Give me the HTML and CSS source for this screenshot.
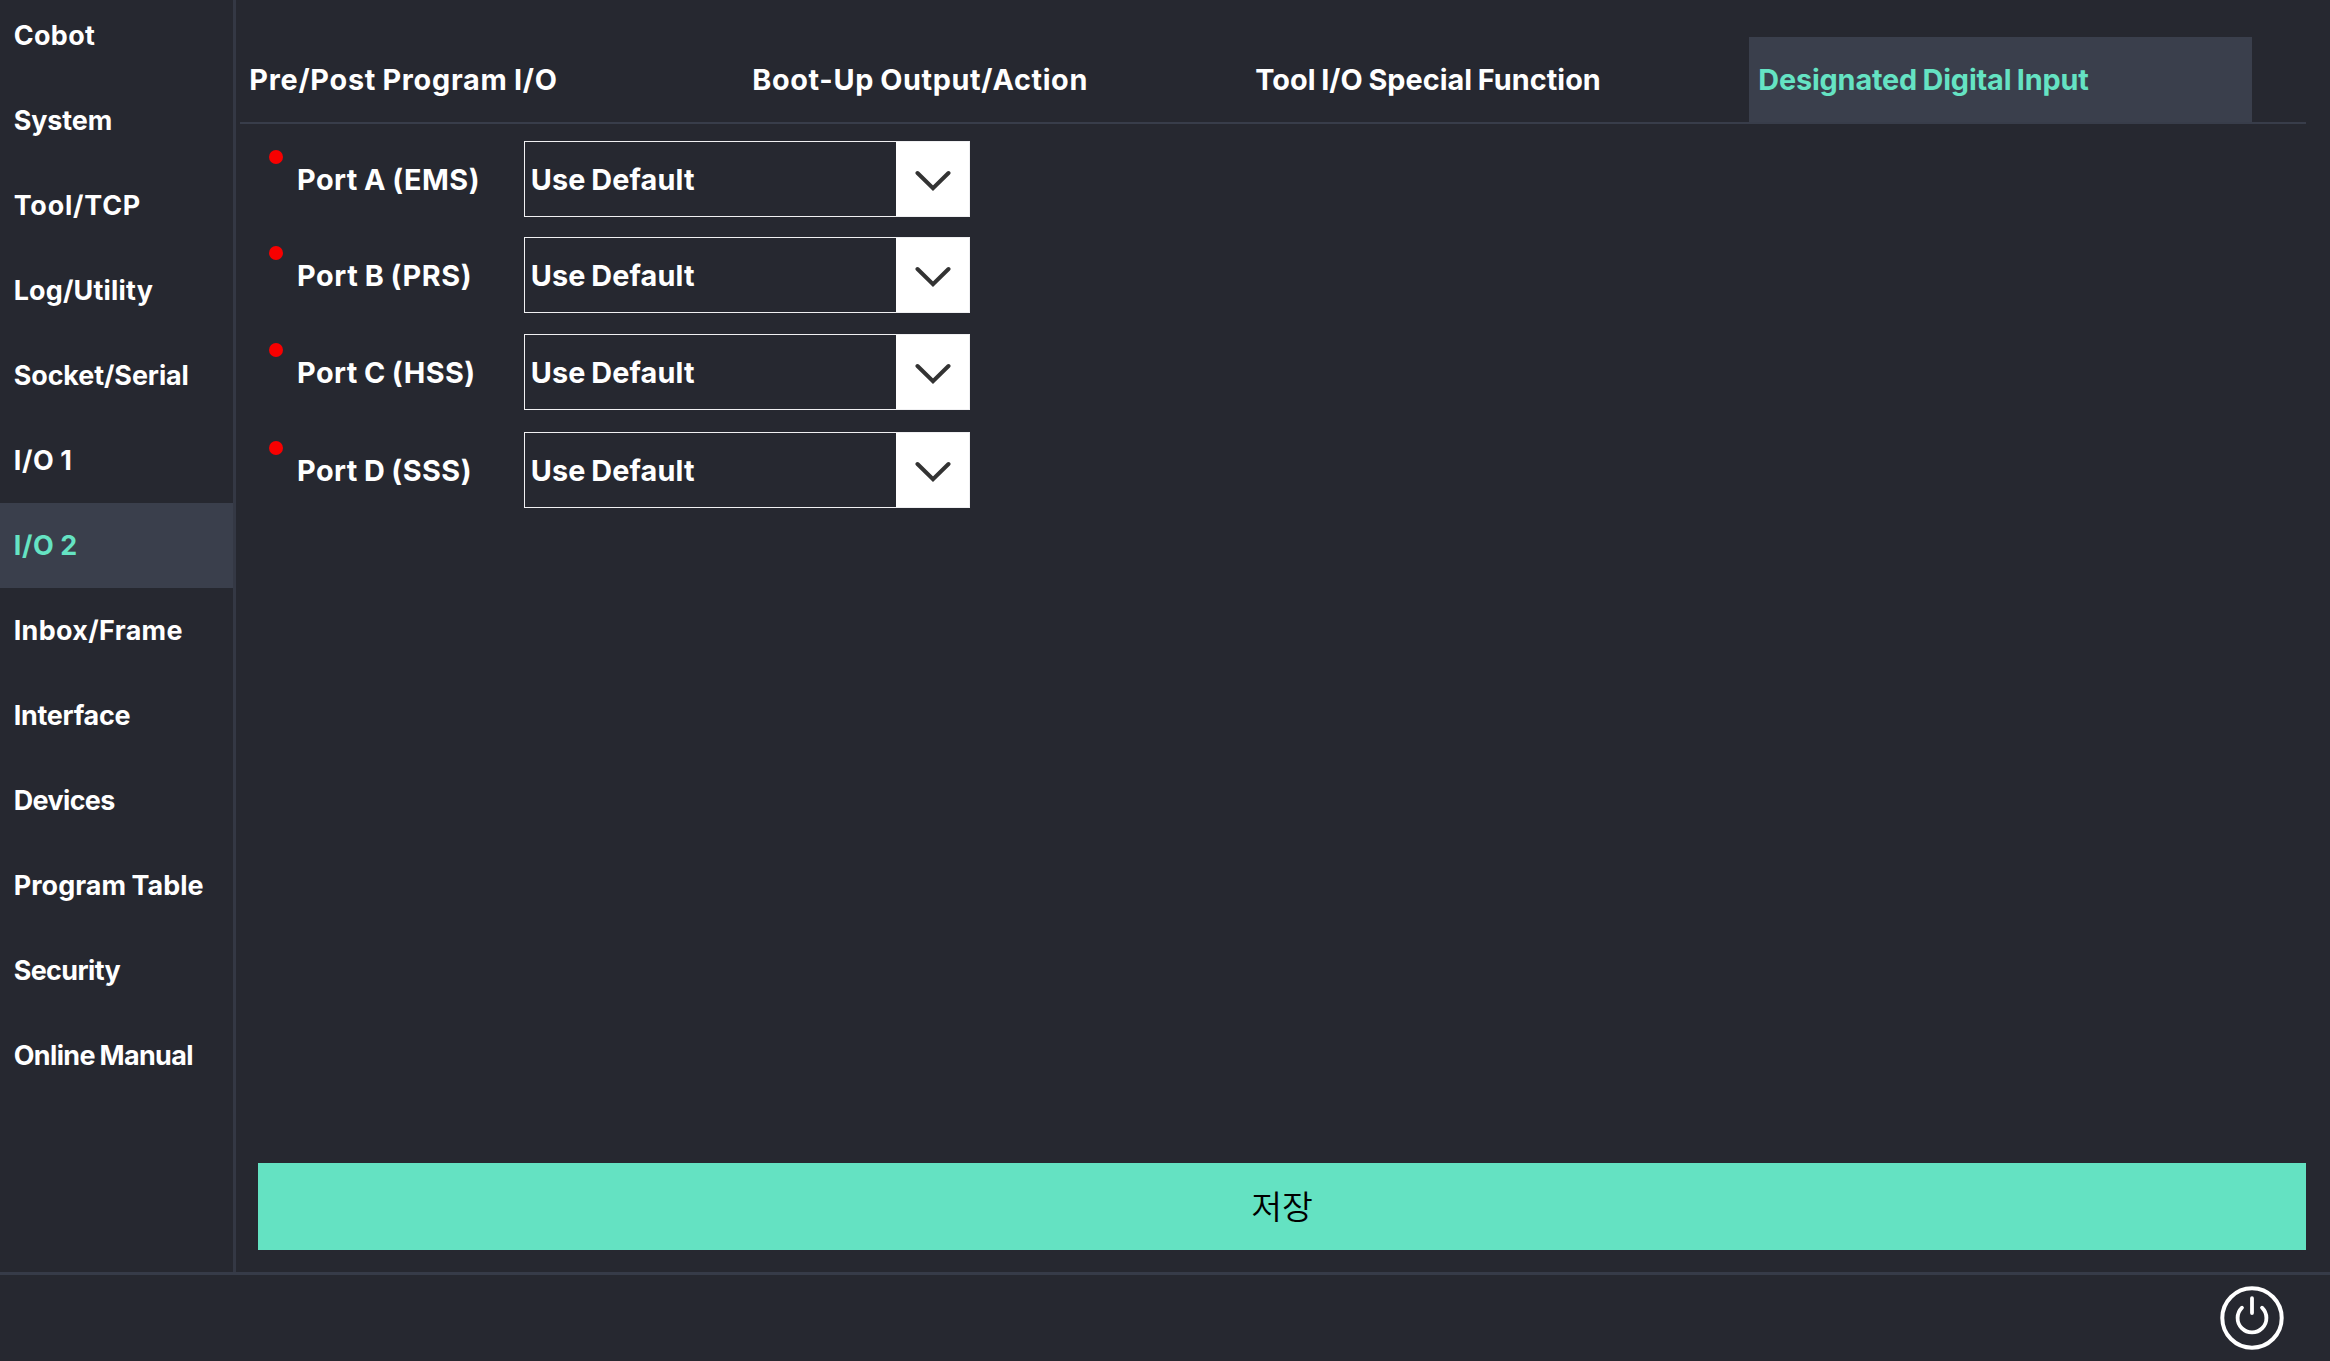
FILE: index.html
```html
<!DOCTYPE html>
<html lang="en">
<head>
<meta charset="utf-8">
<title>Setup - I/O 2</title>
<link rel="stylesheet" href="styles.css">
</head>
<body>
<div class="app">
  <div class="body">
    <nav class="sidebar">
      <a class="item t-cobot">Cobot</a>
      <a class="item t-system">System</a>
      <a class="item t-tool">Tool/TCP</a>
      <a class="item t-log">Log/Utility</a>
      <a class="item t-socket">Socket/Serial</a>
      <a class="item t-io">I/O 1</a>
      <a class="item t-io active">I/O 2</a>
      <a class="item t-inbox">Inbox/Frame</a>
      <a class="item t-interface">Interface</a>
      <a class="item t-devices">Devices</a>
      <a class="item t-program">Program Table</a>
      <a class="item t-security">Security</a>
      <a class="item t-manual">Online Manual</a>
    </nav>
    <main class="content">
      <div class="tabs">
        <a class="tab t-prepost">Pre/Post Program I/O</a>
        <a class="tab t-boot">Boot-Up Output/Action</a>
        <a class="tab t-special">Tool I/O Special Function</a>
        <a class="tab t-designated active">Designated Digital Input</a>
      </div>
      <div class="ports">
        <div class="port">
          <span class="dot"></span><span class="label t-port-a">Port A (EMS)</span>
          <div class="select"><span class="value">Use Default</span><span class="arrow"><svg width="36" height="22" viewBox="0 0 36 22"><path d="M2.5 3 18 18.2 33.5 3"/></svg></span></div>
        </div>
        <div class="port">
          <span class="dot"></span><span class="label t-port-b">Port B (PRS)</span>
          <div class="select"><span class="value">Use Default</span><span class="arrow"><svg width="36" height="22" viewBox="0 0 36 22"><path d="M2.5 3 18 18.2 33.5 3"/></svg></span></div>
        </div>
        <div class="port">
          <span class="dot"></span><span class="label">Port C (HSS)</span>
          <div class="select"><span class="value">Use Default</span><span class="arrow"><svg width="36" height="22" viewBox="0 0 36 22"><path d="M2.5 3 18 18.2 33.5 3"/></svg></span></div>
        </div>
        <div class="port">
          <span class="dot"></span><span class="label">Port D (SSS)</span>
          <div class="select"><span class="value">Use Default</span><span class="arrow"><svg width="36" height="22" viewBox="0 0 36 22"><path d="M2.5 3 18 18.2 33.5 3"/></svg></span></div>
        </div>
      </div>
      <button class="save" lang="ko">저장</button>
    </main>
  </div>
  <footer class="footer">
    <svg class="power" width="66" height="66" viewBox="-33 -33 66 66">
      <circle r="29.7" stroke-width="4"/>
      <path stroke-width="3.8" d="M-10-10.3A14.4 14.4 0 1 0 10-10.3M0-19.8V-5"/>
    </svg>
  </footer>
</div>
</body>
</html>
```
FILE: styles.css
```css
* { box-sizing: border-box; }

body {
  margin: 0;
  background: #262830;
  color: #fff;
  font: 700 28.8px Inter, "Noto Sans CJK KR", sans-serif;
  word-spacing: -1.2px;
  white-space: nowrap;
}

.app {
  height: 1361px;
  display: flex;
  flex-direction: column;
  overflow: hidden;
}

.body {
  height: 1272px;
  display: flex;
}

/* Sidebar */
.sidebar {
  width: 236px;
  border-right: 3px solid #343844;
  font-size: 26.9px;
  overflow: hidden;
}
.item {
  display: block;
  height: 85px;
  padding-left: 13.7px;
  line-height: 85px;
}
.item:first-child { margin-top: -7.5px; }
.item.active { background: #3a3f4c; }
.active { color: #65e3c3; }

/* Main panel */
.content {
  flex: 1;
  display: flex;
  flex-direction: column;
  padding: 37px 24px 22px 4px;
}
.tabs {
  display: grid;
  grid-template-columns: repeat(4, 503px);
  height: 87px;
  border-bottom: 2px solid #383d4a;
}
.tab {
  padding-left: 9.3px;
  line-height: 85px;
}
.tab.active { background: #3a3f4c; }

.ports {
  flex: 1;
  display: flex;
  flex-direction: column;
  padding: 17px 0 0 30px;
}
.port {
  display: flex;
  height: 76px;
  margin-bottom: 21px;
}
.port:first-child { margin-bottom: 20px; }
.port:nth-child(3) { margin-bottom: 22px; }
.dot {
  width: 14px;
  height: 14px;
  margin: 9px 14px 0 -1px;
  border-radius: 50%;
  background: #f80000;
}
.label {
  width: 227px;
  line-height: 77px;
  letter-spacing: .48px;
}
.select {
  display: flex;
  width: 446px;
  border: 1px solid #f0f0f2;
}
.value {
  flex: 1;
  padding-left: 5.7px;
  line-height: 75px;
  letter-spacing: .15px;
}
.arrow {
  display: flex;
  align-items: center;
  justify-content: center;
  width: 73px;
  padding-top: 4px;
  background: #fff;
}
.arrow svg {
  fill: none;
  stroke: #333;
  stroke-width: 4;
  stroke-linecap: round;
}

.save {
  height: 87px;
  margin-left: 18px;
  padding: 0 0 5px;
  border: 0;
  background: #64e2c2;
  color: #000;
  font: 350 33.5px "Noto Sans CJK KR DemiLight", "Noto Sans CJK KR", sans-serif;
}

/* Bottom bar */
.footer {
  flex: 1;
  display: flex;
  justify-content: flex-end;
  padding: 10px 45px 0 0;
  border-top: 3px solid #363b48;
}
.power {
  fill: none;
  stroke: #fff;
  stroke-linecap: round;
}

/* Tracking per caption */
.t-cobot { letter-spacing: .4px; }
.t-system { letter-spacing: -.1px; }
.t-tool { letter-spacing: .8px; }
.t-log { letter-spacing: .2px; }
.t-socket { letter-spacing: -.08px; }
.t-io { letter-spacing: .7px; }
.t-inbox { letter-spacing: .36px; }
.t-interface { letter-spacing: -.28px; }
.t-devices, .t-security { letter-spacing: -.6px; }
.t-program { letter-spacing: .08px; }
.t-manual { letter-spacing: -.6px; }
.t-prepost { letter-spacing: .75px; }
.t-boot { letter-spacing: .64px; }
.t-special { letter-spacing: .04px; }
.t-designated { letter-spacing: -.15px; }
.t-port-a { letter-spacing: .5px; }
.t-port-b { letter-spacing: .62px; }
```
